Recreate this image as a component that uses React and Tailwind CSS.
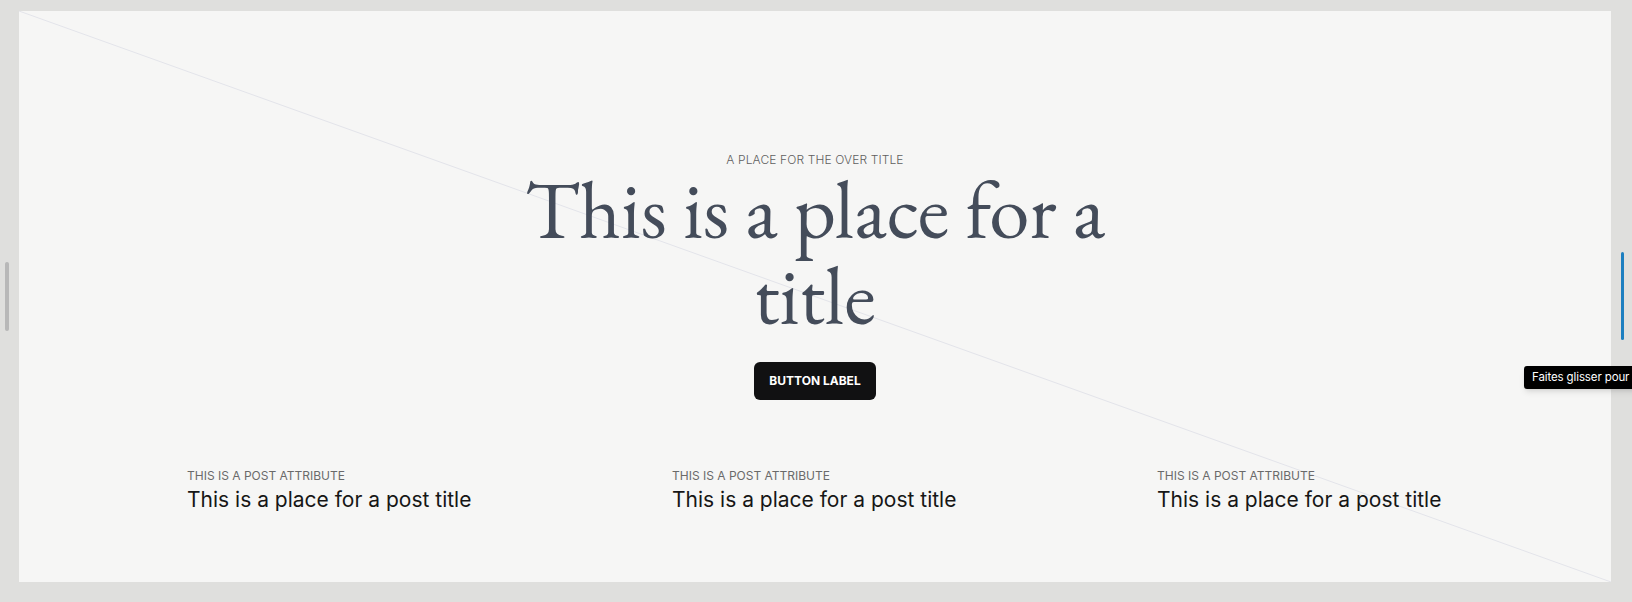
import React from "react";

const posts = [
  { attr: "This is a post attribute", title: "This is a place for a post title" },
  { attr: "This is a post attribute", title: "This is a place for a post title" },
  { attr: "This is a post attribute", title: "This is a place for a post title" },
];

const App = () => {
  return (
    <div className="relative h-[602px] w-full overflow-hidden bg-[#dfdfdd] pl-[19px] pr-[21px] pt-[11px] font-['Inter',sans-serif]">
      {/* left resize handle */}
      <div className="absolute left-[5px] top-[262px] h-[69px] w-[4px] rounded-full bg-[#b8b8b8]" />

      <div className="relative h-[571px] bg-[#f6f6f5]">
        {/* placeholder diagonal */}
        <svg className="pointer-events-none absolute inset-0 h-full w-full" aria-hidden="true">
          <line x1="0" y1="0" x2="100%" y2="100%" stroke="#e3e4ea" strokeWidth="1" />
        </svg>

        <div className="relative flex flex-col items-center pt-[141px]">
          <p className="text-[12px] leading-4 font-light uppercase tracking-[0.01em] text-[#5f5f5f]">
            A place for the over title
          </p>
          <h1 className="-mt-[2px] text-center font-['EB_Garamond','Liberation_Serif',serif] text-[81px] leading-[86px] text-[#444c5a]">
            This is a place for a
            <br />
            title
          </h1>
          <button className="mt-[24px] h-[38px] w-[122px] rounded-md bg-[#111112] text-[12px] font-bold text-white">
            BUTTON LABEL
          </button>
        </div>

        <div className="relative mt-[68px] grid grid-cols-[repeat(3,300px)] justify-center gap-x-[185px] pl-[14px]">
          {posts.map((post, i) => (
            <div key={i}>
              <p className="text-[12px] leading-4 uppercase text-[#6a6a6a]">{post.attr}</p>
              <h3 className="mt-[2px] whitespace-nowrap text-[21px] leading-7 text-[#161616]">{post.title}</h3>
            </div>
          ))}
        </div>
      </div>

      {/* right scroll indicator */}
      <div className="absolute left-[1621px] top-[252px] h-[88px] w-[3px] rounded-full bg-[#1c7fc0]" />

      {/* tooltip */}
      <div className="absolute left-[1524px] top-[366px] whitespace-nowrap rounded-[3px] bg-black px-[8px] py-[4px] text-[11.5px] leading-[15px] tracking-[-0.01em] text-white shadow-md">
        Faites glisser pour redimensionner
      </div>
    </div>
  );
};

export default App;
